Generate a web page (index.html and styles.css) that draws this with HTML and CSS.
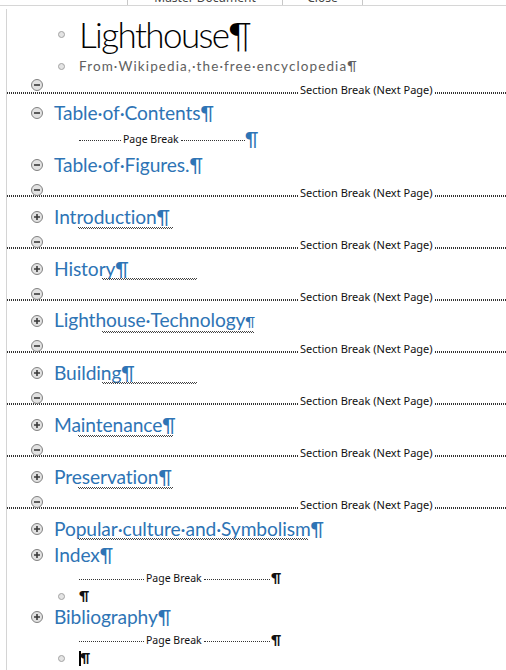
FILE: index.html
```html
<!DOCTYPE html>
<html>
<head>
<meta charset="utf-8">
<link rel="stylesheet" href="styles.css">
</head>
<body>
<div class="ribbon">
  <div class="rb-pad"></div>
  <div class="rb-cell rb-master"><span>Master Document</span></div>
  <div class="rb-cell rb-close"><span>Close</span></div>
  <div class="rb-cell rb-rest"></div>
</div>
<div class="doc">
  <div class="brow title-row"><span class="dot"></span><span class="title">Lighthouse¶</span></div>
  <div class="brow sub-row"><span class="dot"></span><span class="subtitle">From·Wikipedia,·the·free·encyclopedia¶</span></div>

  <div class="section first">
    <svg class="tg" viewBox="0 0 12 12"><circle cx="6" cy="6" r="5.5"/><path d="M3 6h6"/></svg>
    <div class="sb"><i class="sb-l"></i><span class="sb-t">Section Break (Next Page)</span><i class="sb-r"></i></div>
  </div>

  <div class="h"><svg class="tg" viewBox="0 0 12 12"><circle cx="6" cy="6" r="5.5"/><path d="M3 6h6"/></svg><span class="ht">Table·of·Contents¶</span></div>
  <div class="pb"><div class="pb-line"><i class="pb-seg a"></i><span class="pb-t">Page Break</span><i class="pb-seg b"></i></div><span class="pb-p">¶</span></div>
  <div class="h"><svg class="tg" viewBox="0 0 12 12"><circle cx="6" cy="6" r="5.5"/><path d="M3 6h6"/></svg><span class="ht">Table·of·Figures.¶</span></div>

  <div class="section">
    <svg class="tg" viewBox="0 0 12 12"><circle cx="6" cy="6" r="5.5"/><path d="M3 6h6"/></svg>
    <div class="sb"><i class="sb-l"></i><span class="sb-t">Section Break (Next Page)</span><i class="sb-r"></i></div>
  </div>
  <div class="h"><svg class="tg" viewBox="0 0 12 12"><circle cx="6" cy="6" r="5.5"/><path d="M3 6h6M6 3v6"/></svg><span class="ht">Introduction¶</span><i class="squig sq-a"></i></div>

  <div class="section">
    <svg class="tg" viewBox="0 0 12 12"><circle cx="6" cy="6" r="5.5"/><path d="M3 6h6"/></svg>
    <div class="sb"><i class="sb-l"></i><span class="sb-t">Section Break (Next Page)</span><i class="sb-r"></i></div>
  </div>
  <div class="h"><svg class="tg" viewBox="0 0 12 12"><circle cx="6" cy="6" r="5.5"/><path d="M3 6h6M6 3v6"/></svg><span class="ht">History¶</span><i class="squig sq-b"></i></div>

  <div class="section">
    <svg class="tg" viewBox="0 0 12 12"><circle cx="6" cy="6" r="5.5"/><path d="M3 6h6"/></svg>
    <div class="sb"><i class="sb-l"></i><span class="sb-t">Section Break (Next Page)</span><i class="sb-r"></i></div>
  </div>
  <div class="h"><svg class="tg" viewBox="0 0 12 12"><circle cx="6" cy="6" r="5.5"/><path d="M3 6h6M6 3v6"/></svg><span class="ht">Lighthouse·Technology<span class="sp">¶</span></span><i class="squig sq-c"></i></div>

  <div class="section">
    <svg class="tg" viewBox="0 0 12 12"><circle cx="6" cy="6" r="5.5"/><path d="M3 6h6"/></svg>
    <div class="sb"><i class="sb-l"></i><span class="sb-t">Section Break (Next Page)</span><i class="sb-r"></i></div>
  </div>
  <div class="h"><svg class="tg" viewBox="0 0 12 12"><circle cx="6" cy="6" r="5.5"/><path d="M3 6h6M6 3v6"/></svg><span class="ht">Building¶</span><i class="squig sq-d"></i></div>

  <div class="section">
    <svg class="tg" viewBox="0 0 12 12"><circle cx="6" cy="6" r="5.5"/><path d="M3 6h6"/></svg>
    <div class="sb"><i class="sb-l"></i><span class="sb-t">Section Break (Next Page)</span><i class="sb-r"></i></div>
  </div>
  <div class="h"><svg class="tg" viewBox="0 0 12 12"><circle cx="6" cy="6" r="5.5"/><path d="M3 6h6M6 3v6"/></svg><span class="ht">Maintenance¶</span><i class="squig sq-a"></i></div>

  <div class="section">
    <svg class="tg" viewBox="0 0 12 12"><circle cx="6" cy="6" r="5.5"/><path d="M3 6h6"/></svg>
    <div class="sb"><i class="sb-l"></i><span class="sb-t">Section Break (Next Page)</span><i class="sb-r"></i></div>
  </div>
  <div class="h"><svg class="tg" viewBox="0 0 12 12"><circle cx="6" cy="6" r="5.5"/><path d="M3 6h6M6 3v6"/></svg><span class="ht">Preservation¶</span><i class="squig sq-a"></i></div>

  <div class="section">
    <svg class="tg" viewBox="0 0 12 12"><circle cx="6" cy="6" r="5.5"/><path d="M3 6h6"/></svg>
    <div class="sb"><i class="sb-l"></i><span class="sb-t">Section Break (Next Page)</span><i class="sb-r"></i></div>
  </div>
  <div class="h"><svg class="tg" viewBox="0 0 12 12"><circle cx="6" cy="6" r="5.5"/><path d="M3 6h6M6 3v6"/></svg><span class="ht">Popular·culture·and·Symbolism¶</span><i class="squig sq-e"></i></div>
  <div class="h"><svg class="tg" viewBox="0 0 12 12"><circle cx="6" cy="6" r="5.5"/><path d="M3 6h6M6 3v6"/></svg><span class="ht">Index¶</span></div>
  <div class="pb small"><div class="pb-line"><i class="pb-seg a"></i><span class="pb-t">Page Break</span><i class="pb-seg b"></i></div><span class="pb-p">¶</span></div>
  <div class="brow small"><span class="dot"></span><span class="bp">¶</span></div>
  <div class="h"><svg class="tg" viewBox="0 0 12 12"><circle cx="6" cy="6" r="5.5"/><path d="M3 6h6M6 3v6"/></svg><span class="ht">Bibliography¶</span></div>
  <div class="pb small"><div class="pb-line"><i class="pb-seg a"></i><span class="pb-t">Page Break</span><i class="pb-seg b"></i></div><span class="pb-p">¶</span></div>
  <div class="brow small"><span class="dot"></span><span class="bp"><span class="cursor"></span>¶</span></div>
</div>
</body>
</html>
```
FILE: styles.css
```css
html, body {
  margin: 0;
  padding: 0;
  background: #fff;
  overflow: hidden;
}
body {
  font-family: Lato, "Liberation Sans", sans-serif;
  color: #000;
}
i { font-style: normal; display: block; }

/* cut-off ribbon strip */
.ribbon {
  display: flex;
  height: 5px;
  overflow: hidden;
  border-bottom: 1px solid #d6d6d6;
  font: 12px/14px "Noto Sans", sans-serif;
  color: #444;
}
.rb-pad { width: 127px; }
.rb-cell {
  border-left: 1px solid #c8c8c8;
  display: flex;
  justify-content: center;
  align-items: flex-start;
  height: 5px;
}
.rb-cell span { margin-top: -9px; white-space: nowrap; }
.rb-master { width: 154px; }
.rb-close { width: 79px; }
.rb-rest { flex: 1; }

.doc {
  margin: 3px 0 0 6px;
  border-left: 1px solid #d4d4d4;
  height: 661px;
}

/* bullet rows */
.brow {
  display: flex;
  align-items: center;
  padding-left: 51px;
  gap: 14px;
}
.dot {
  width: 7px;
  height: 7px;
  box-sizing: border-box;
  border-radius: 50%;
  background: #e4e4e4;
  border: 1px solid #a3a3a3;
  flex: none;
}
.title-row { height: 50px; }
.title {
  font: 300 35px/50px Lato, sans-serif;
  letter-spacing: -1.6px;
  color: #000;
  white-space: nowrap;
}
.sub-row { height: 14px; }
.subtitle {
  font: 400 13.5px/14px Lato, sans-serif;
  letter-spacing: 1.1px;
  color: #606060;
  white-space: nowrap;
}
.brow.small { height: 16px; }
.bp {
  display: flex;
  align-items: center;
  font: 700 14px/16px Lato, sans-serif;
  color: #111;
}
.cursor {
  width: 2px;
  height: 15px;
  background: #000;
  margin-right: -1px;
}

/* expand/collapse toggles */
.tg {
  width: 12px;
  height: 12px;
  flex: none;
}
.tg circle { fill: #e2e2e2; stroke: #808080; stroke-width: 1; }
.tg path { stroke: #3a3a3a; stroke-width: 1.6; fill: none; }

/* section breaks */
.section {
  display: grid;
  height: 26px;
}
.section > * { grid-area: 1 / 1; }
.section .tg {
  margin: 6px 0 0 24px;
  align-self: start;
  justify-self: start;
  z-index: 1;
}
.sb {
  display: flex;
  align-items: flex-end;
  height: 19px;
  align-self: start;
}
.section.first { height: 27px; }
.section.first .sb { height: 21px; }
.sb-l, .sb-r {
  height: 2px;
  box-sizing: border-box;
  border-top: 1px dotted #333;
  border-bottom: 1px dotted #333;
}
.sb-l { width: 291px; flex: none; }
.sb-r { flex: 1; }
.sb-t {
  font: 11px/12px "Noto Sans", sans-serif;
  color: #111;
  margin: 0 2px -2px;
  white-space: nowrap;
}

/* headings */
.h {
  display: flex;
  align-items: center;
  height: 26px;
  padding-left: 24px;
  gap: 11px;
  position: relative;
}
.ht {
  font: 400 19.2px/26px Lato, sans-serif;
  letter-spacing: -0.1px;
  color: #2e74b5;
  white-space: nowrap;
}
.sp { font-size: 14px; }

.squig {
  position: absolute;
  height: 2px;
  background:
    linear-gradient(90deg, #444 50%, transparent 50%) 0 0 / 2px 1px repeat-x,
    linear-gradient(90deg, transparent 50%, #444 50%) 0 1px / 2px 1px repeat-x;
}
.sq-a { left: 71px; width: 95px; top: 23px; }
.sq-b { left: 95px; width: 95px; top: 22px; }
.sq-c { left: 95px; width: 152px; top: 23px; }
.sq-d { left: 95px; width: 95px; top: 22px; }
.sq-e { left: 71px; width: 230px; top: 22px; }

/* page breaks */
.pb {
  display: flex;
  align-items: center;
  height: 26px;
  padding-left: 72px;
}
.pb-line {
  display: flex;
  align-items: center;
  width: 166px;
}
.pb-seg {
  height: 0;
  border-top: 1px dotted #333;
  margin-top: 3px;
}
.pb-seg.a { width: 42px; flex: none; }
.pb-seg.b { flex: 1; }
.pb-t {
  font: 10.5px/12px "Noto Sans", sans-serif;
  color: #111;
  margin: 0 2px;
  white-space: nowrap;
}
.pb-p {
  font: 400 19.2px/26px Lato, sans-serif;
  color: #2e74b5;
  margin-left: 0;
}
.pb.small { height: 20px; }
.pb.small .pb-line { width: 191px; }
.pb.small .pb-seg.a { width: 65px; }
.pb.small .pb-p {
  font: 700 14px/20px Lato, sans-serif;
  color: #111;
  margin-left: 1px;
}
```
